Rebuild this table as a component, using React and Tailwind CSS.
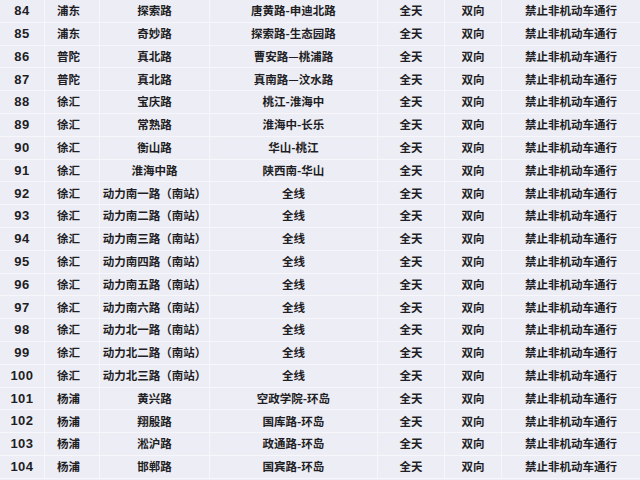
import React from 'react';

const rows = [
  ['84', '浦东', '探索路', '唐黄路-申迪北路'],
  ['85', '浦东', '奇妙路', '探索路-生态园路'],
  ['86', '普陀', '真北路', '曹安路—桃浦路'],
  ['87', '普陀', '真北路', '真南路—汶水路'],
  ['88', '徐汇', '宝庆路', '桃江-淮海中'],
  ['89', '徐汇', '常熟路', '淮海中-长乐'],
  ['90', '徐汇', '衡山路', '华山-桃江'],
  ['91', '徐汇', '淮海中路', '陕西南-华山'],
  ['92', '徐汇', '动力南一路（南站）', '全线'],
  ['93', '徐汇', '动力南二路（南站）', '全线'],
  ['94', '徐汇', '动力南三路（南站）', '全线'],
  ['95', '徐汇', '动力南四路（南站）', '全线'],
  ['96', '徐汇', '动力南五路（南站）', '全线'],
  ['97', '徐汇', '动力南六路（南站）', '全线'],
  ['98', '徐汇', '动力北一路（南站）', '全线'],
  ['99', '徐汇', '动力北二路（南站）', '全线'],
  ['100', '徐汇', '动力北三路（南站）', '全线'],
  ['101', '杨浦', '黄兴路', '空政学院-环岛'],
  ['102', '杨浦', '翔殷路', '国库路-环岛'],
  ['103', '杨浦', '淞沪路', '政通路-环岛'],
  ['104', '杨浦', '邯郸路', '国宾路-环岛'],
];

export default function App() {
  return (
    <div className="w-[640px] h-[480px] overflow-hidden bg-[#ededf5] text-[#1e1e24] font-['Noto_Sans_CJK_SC','Noto_Sans',sans-serif] text-[11.5px] font-bold">
      {rows.map((r) => (
        <div
          key={r[0]}
          className="grid grid-cols-[45px_55px_110px_168px_67px_57px_138px] h-[22.8px] border-b border-[#f6f6fb]"
        >
          <div className="flex items-center justify-center border-r border-[#f6f6fb] font-['Liberation_Sans',Arial,sans-serif] text-[13px] tracking-[0.5px]">
            {r[0]}
          </div>
          <div className="flex items-center pl-[12px] border-r border-[#f6f6fb]">
            {r[1]}
          </div>
          <div className="flex items-center justify-center border-r border-[#f6f6fb] whitespace-nowrap">
            {r[2]}
          </div>
          <div className="flex items-center justify-center border-r border-[#f6f6fb] whitespace-nowrap">
            {r[3]}
          </div>
          <div className="flex items-center justify-center border-r border-[#f6f6fb]">
            全天
          </div>
          <div className="flex items-center justify-center border-r border-[#f6f6fb]">
            双向
          </div>
          <div className="flex items-center justify-center whitespace-nowrap">
            禁止非机动车通行
          </div>
        </div>
      ))}
    </div>
  );
}
